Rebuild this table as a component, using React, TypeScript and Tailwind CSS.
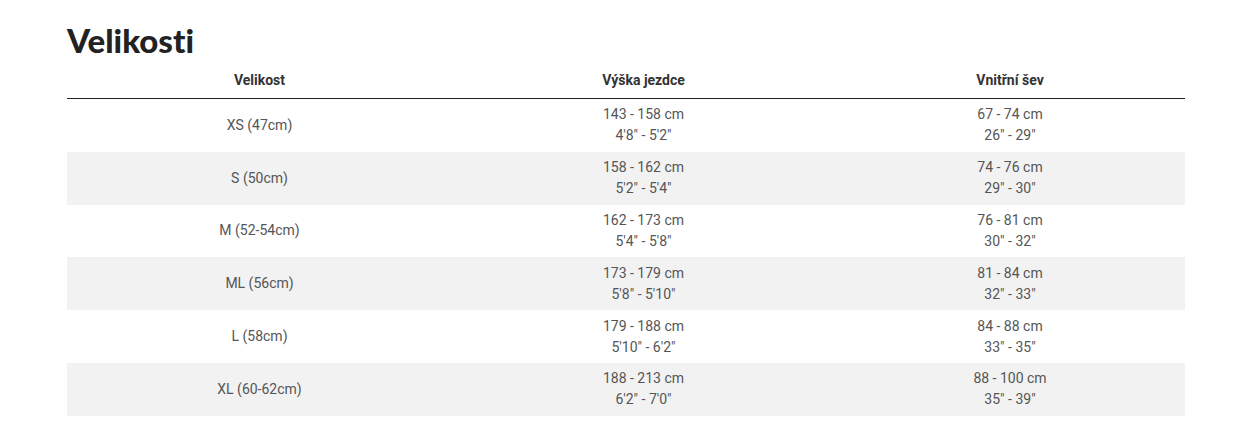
import React from "react";

const rows = [
  { size: "XS (47cm)", height: ["143 - 158 cm", "4'8\" - 5'2\""], inseam: ["67 - 74 cm", "26\" - 29\""] },
  { size: "S (50cm)", height: ["158 - 162 cm", "5'2\" - 5'4\""], inseam: ["74 - 76 cm", "29\" - 30\""] },
  { size: "M (52-54cm)", height: ["162 - 173 cm", "5'4\" - 5'8\""], inseam: ["76 - 81 cm", "30\" - 32\""] },
  { size: "ML (56cm)", height: ["173 - 179 cm", "5'8\" - 5'10\""], inseam: ["81 - 84 cm", "32\" - 33\""] },
  { size: "L (58cm)", height: ["179 - 188 cm", "5'10\" - 6'2\""], inseam: ["84 - 88 cm", "33\" - 35\""] },
  { size: "XL (60-62cm)", height: ["188 - 213 cm", "6'2\" - 7'0\""], inseam: ["88 - 100 cm", "35\" - 39\""] },
];

const cols = "grid grid-cols-[385px_383px_350px]";

export default function App() {
  return (
    <div className="bg-white min-h-[445px] pl-[67px] pt-[18px] font-['Roboto',sans-serif]">
      <h1 className="text-[33px] leading-[44px] font-black text-[#222] font-['Lato',sans-serif] [font-variant-ligatures:none]">
        Velikosti
      </h1>
      <div className="w-[1118px]">
        <div className={`${cols} h-[37px] pb-[7px] border-b-[1.5px] border-[#222] text-[14px] font-bold text-[#333]`}>
          <div className="flex items-end justify-center">Velikost</div>
          <div className="flex items-end justify-center">Výška jezdce</div>
          <div className="flex items-end justify-center">Vnitřní šev</div>
        </div>
        {rows.map((r, i) => (
          <div
            key={r.size}
            className={`${cols} h-[52.8px] text-[14px] leading-[21px] text-[#555] ${i % 2 === 1 ? "bg-[#f2f2f2]" : ""}`}
          >
            <div className="flex items-center justify-center">{r.size}</div>
            <div className="flex flex-col items-center justify-center">
              <span>{r.height[0]}</span>
              <span>{r.height[1]}</span>
            </div>
            <div className="flex flex-col items-center justify-center">
              <span>{r.inseam[0]}</span>
              <span>{r.inseam[1]}</span>
            </div>
          </div>
        ))}
      </div>
    </div>
  );
}
